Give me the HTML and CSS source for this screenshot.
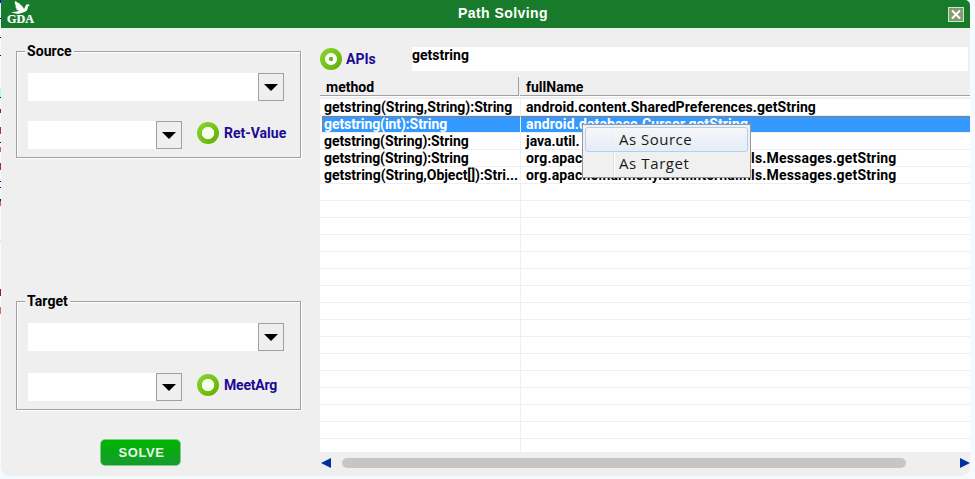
FILE: index.html
```html
<!DOCTYPE html>
<html lang="en">
<head>
<meta charset="utf-8">
<title>Path Solving</title>
<link rel="stylesheet" href="styles.css">
</head>
<body>
<div class="edge"></div>
<div class="window">
  <header class="titlebar">
    <svg class="logo" width="30" height="26" viewBox="0 0 30 26">
      <path fill="#fff" d="M9 1 C13 3 17 6 18 9 L20 5 C21 4 22 4 24 5 L22 6.500 C22 10 20 12 17 12.500 L12 14 L5 12.500 L13 11 C11 10 10 9.500 10.500 8.500 C9.500 7.500 9 7 10 6 C9 5 8.500 3 9 1Z"/>
      <text class="logo-text" x="1" y="23" textLength="27" lengthAdjust="spacingAndGlyphs">GDA</text>
    </svg>
    <h1>Path Solving</h1>
    <button class="close" aria-label="Close"><svg width="16" height="15" viewBox="0 0 16 15"><path d="M4 3.500l8 8M12 3.500l-8 8" stroke="#fff" stroke-width="2"/></svg></button>
  </header>
  <main>
    <section class="left">
      <div class="group source">
        <span class="legend">Source</span>
        <div class="combo wide"><button><svg width="14" height="7"><path d="M0 0h14l-7 7z"/></svg></button></div>
        <div class="line">
          <div class="combo"><button><svg width="14" height="7"><path d="M0 0h14l-7 7z"/></svg></button></div>
          <span class="ring"></span><label>Ret-Value</label>
        </div>
      </div>
      <div class="group target">
        <span class="legend">Target</span>
        <div class="combo wide"><button><svg width="14" height="7"><path d="M0 0h14l-7 7z"/></svg></button></div>
        <div class="line">
          <div class="combo"><button><svg width="14" height="7"><path d="M0 0h14l-7 7z"/></svg></button></div>
          <span class="ring"></span><label class="meet">MeetArg</label>
        </div>
      </div>
      <button class="solve">SOLVE</button>
    </section>
    <section class="right">
      <div class="search">
        <span class="ring on"></span><label>APIs</label>
        <div class="query">getstring</div>
      </div>
      <div class="thead"><div>method</div><div>fullName</div></div>
      <div class="rows">
        <div class="row"><div><span>getstring(String,String):String</span></div><div><span class="prefs">android.content.SharedPreferences.getString</span></div></div>
        <div class="row selected"><div><span class="cursor-method">getstring(int):String</span></div><div><span class="cursor">android.database.Cursor.getString</span></div></div>
        <div class="row"><div><span class="single">getstring(String):String</span></div><div><span>java.util.</span></div></div>
        <div class="row"><div><span class="single">getstring(String):String</span></div><div><span class="messages">org.apache.harmony.awt.internal.nls.Messages.getString</span></div></div>
        <div class="row"><div><span class="object">getstring(String,Object[]):Stri...</span></div><div><span class="messages">org.apache.harmony.awt.internal.nls.Messages.getString</span></div></div>
        <div class="row"><div></div><div></div></div><div class="row"><div></div><div></div></div>
        <div class="row"><div></div><div></div></div><div class="row"><div></div><div></div></div>
        <div class="row"><div></div><div></div></div><div class="row"><div></div><div></div></div>
        <div class="row"><div></div><div></div></div><div class="row"><div></div><div></div></div>
        <div class="row"><div></div><div></div></div><div class="row"><div></div><div></div></div>
        <div class="row"><div></div><div></div></div><div class="row"><div></div><div></div></div>
        <div class="row"><div></div><div></div></div><div class="row"><div></div><div></div></div>
        <div class="row"><div></div><div></div></div><div class="row"><div></div><div></div></div>
      </div>
      <div class="scroll">
        <svg width="10" height="10"><path fill="#039" d="M10 0v10L0 5z"/></svg>
        <span class="thumb"></span>
        <svg width="10" height="10"><path fill="#039" d="M0 0v10l10-5z"/></svg>
      </div>
    </section>
  </main>
  <div class="menu">
    <div class="item hover"><span class="as-source">As Source</span></div>
    <div class="item"><span class="as-target">As Target</span></div>
  </div>
</div>
</body>
</html>
```
FILE: styles.css
```css
* { box-sizing: border-box; }
body { margin: 0; width: 975px; height: 479px; overflow: hidden; background: #f5faff; display: flex; font: bold 14px/16px Roboto, "Liberation Sans", sans-serif; color: #000; }
button { padding: 0; margin: 0; font: inherit; }
svg { display: block; }
span { display: inline-block; white-space: nowrap; }
.edge {
  width: 1px; height: 479px;
  background: linear-gradient(#00f 0 3px, transparent 3px 18px, #008 18px 19px, transparent 19px 37px, #008 37px 38px, transparent 38px 55px, #008 55px 56px, transparent 56px 88px, #aff 88px 97px, #008 97px 98px, transparent 98px 109px, #824 109px 113px, transparent 113px 127px, #b26 127px 134px, transparent 134px 142px, #008 142px 143px, transparent 143px 147px, #c65 147px 152px, transparent 152px 163px, #a26 163px 170px, transparent 170px 181px, #008 181px 182px, transparent 182px 187px, #008 187px 188px, transparent 188px 199px, #008 199px 200px, #c65 202px 206px, transparent 206px 240px, #aff 240px 242px, transparent 242px 289px, #824 289px 296px, transparent 296px 307px, #c75 307px 314px, transparent 314px);
}
.window { position: relative; width: 969px; height: 476px; background: #efefef; border-radius: 0 5px 9px 9px; overflow: hidden; }
.titlebar { height: 28px; background: #177b2b; display: flex; align-items: flex-start; padding-left: 5px; padding-right: 6px; }
.logo { width: 30px; }
.logo-text { font: bold 12px "Liberation Serif", serif; fill: #fff; stroke: #fff; stroke-width: .2px; }
h1 { flex: 1; margin: 4px 0 0 22px; text-align: center; font: bold 14px/18px "Liberation Sans", sans-serif; letter-spacing: .45px; color: #fff; }
.close { width: 16px; height: 15px; margin-top: 7px; border: 1px solid #c8e8c4; background: #849c70; display: flex; align-items: center; justify-content: center; }
.close svg { flex: none; }
main { display: flex; height: 448px; }
.left { width: 319px; padding: 23px 0 0 15px; }
.group { width: 285px; border: 1px solid #a0a0a0; box-shadow: 1px 1px #fff, inset 1px 1px #fff; padding: 0 0 0 11px; }
.source { height: 107px; }
.target { height: 109px; margin-top: 143px; }
.legend { display: block; width: max-content; height: 16px; margin: -9px 0 0 -3px; padding: 0 2px; background: #efefef; letter-spacing: .08px; }
.combo { width: 154px; height: 28px; background: #fff; display: flex; justify-content: flex-end; }
.combo.wide { width: 256px; margin-top: 14px; }
.combo button { width: 26px; height: 28px; background: #efefef; border: 1px solid #a0a0a0; display: flex; align-items: center; justify-content: center; }
.combo button svg { margin: 1px 1px 0 0; }
.line { display: flex; margin-top: 20px; }
.target .line { margin-top: 22px; }
.ring { width: 22px; height: 22px; border-radius: 50%; background: radial-gradient(circle, #f4ffe6 0 4px, #fff 5.8px, transparent 6.5px), linear-gradient(135deg, #8ed636, #5fae00); margin: 1px 0 0 15px; flex: none; }
.ring.on { background: radial-gradient(circle, #69bb0c 0 1.8px, #fff 2.6px 5.5px, transparent 6.4px), linear-gradient(135deg, #8ed636, #5fae00); }
label { color: #1a0a94; margin: 4px 0 0 5px; white-space: nowrap; }
label.meet { letter-spacing: -.2px; }
.solve { display: block; width: 81px; height: 27px; margin: 29px 0 0 84px; border: 1px solid #7fce88; border-radius: 5px; background: linear-gradient(#00b400, #179a30); color: #e8f8e8; font: bold 13px/24px "Liberation Sans", sans-serif; letter-spacing: .6px; padding-left: 2px; }
.right { width: 650px; }
.search { display: flex; height: 49px; padding-top: 19px; }
.search .ring { margin: 1px 0 0; }
.search label { margin-left: 4px; }
.query { width: 556px; height: 24px; background: #fff; margin-left: auto; margin-right: 2px; }
.thead { display: flex; height: 21px; border-bottom: 1px solid #efefef; }
.thead div { height: 19px; padding: 2px 0 0 6px; border-bottom: 1px solid #a0a0a0; box-shadow: 0 1px #fff; }
.thead div:first-child { width: 199px; border-right: 1px solid #a0a0a0; }
.thead div:last-child { width: 450px; margin-left: 1px; }
.rows { height: 354px; background: #fff; overflow: hidden; border-top: 1px solid #efefef; }
.row { height: 17px; display: flex; border-bottom: 1px solid #efefef; line-height: 17px; }
.row div { padding-left: 5px; height: 16px; width: 449px; }
.row div:first-child { width: 201px; padding-left: 4px; border-right: 1px solid #efefef; }
.selected div { background: #39f; color: #fff; border-top: 1px dotted #c66a10; line-height: 15px; }
.selected div:first-child { margin-left: 2px; width: 199px; padding-left: 1px; border-left: 1px dotted #c66a10; }
.single, .cursor-method { letter-spacing: -.09px; }
.object { letter-spacing: -.03px; }
.prefs { letter-spacing: .07px; }
.cursor { letter-spacing: .15px; }
.messages { letter-spacing: .17px; }
.scroll { height: 24px; display: flex; align-items: center; padding: 0 0 3px 1px; }
.thumb { width: 564px; height: 10px; border-radius: 5px; background: #c6c6c6; margin: 0 auto 0 11px; }
.menu { position: absolute; left: 581px; top: 124px; width: 169px; height: 54px; border: 1px solid #979797; padding: 2px; background: linear-gradient(90deg, transparent 30px, #e0e0e0 30px 31px, #fff 31px 32px, transparent 32px), #f0f0f0; font: 15px/22px "Open Sans", sans-serif; color: #1a1a1a; }
.item { height: 25px; padding-left: 33px; border: 1px solid transparent; }
.item + .item { margin-top: -1px; }
.item.hover { border-color: #aecff7; border-radius: 3px; background: linear-gradient(rgba(246,248,251,.8), rgba(228,236,247,.8)); }
.as-source { letter-spacing: .5px; }
.as-target { letter-spacing: .6px; }
```
